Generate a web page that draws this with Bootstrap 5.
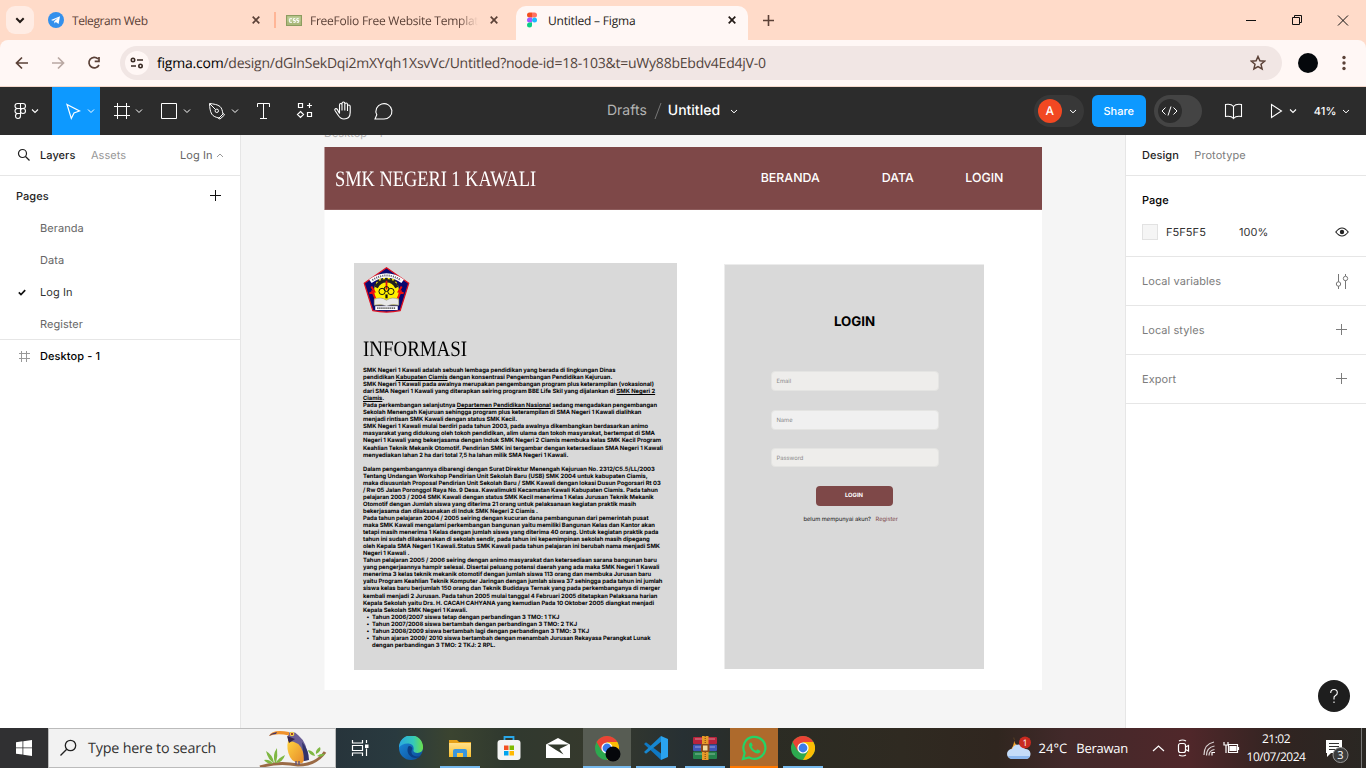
<!DOCTYPE html>
<html lang="id">
<head>
<meta charset="utf-8">
<meta name="viewport" content="width=device-width, initial-scale=1">
<title>Untitled – Figma</title>
<link href="https://cdn.jsdelivr.net/npm/bootstrap@5.3.0/dist/css/bootstrap.min.css" rel="stylesheet">
<style>
body{width:1366px;height:768px;overflow:hidden;font-family:Inter,sans-serif;font-size:11px;line-height:16px;color:#333;background:#fff;text-rendering:geometricPrecision}
svg{display:block;flex:none}
.win-font{font-family:"Open Sans","Noto Sans",sans-serif}
.tabstrip{height:40px;background:#ffdbc9}
.tab-search{width:28px;height:28px;border-radius:9px;background:#ffece4;margin:6px 6px 6px 6px}
.browser-tab{width:234px;padding-left:8px;font-size:12px;letter-spacing:-.2px;color:#5b4137;white-space:nowrap}
.tab-title{flex:1;overflow:hidden;margin-left:8px}
.tab-sep{width:2px;height:16px;background:#ffb596}
.tab-fade{-webkit-mask-image:linear-gradient(90deg,#000 88%,transparent);mask-image:linear-gradient(90deg,#000 88%,transparent)}
.tab-active{width:232px;height:34px;margin-top:6px;border-radius:10px 10px 0 0;background:#fff7f5;color:#231a16;padding:0 0 6px 8px}
.addressbar{height:47px;background:#fff7f5;border-bottom:1px solid #f3d7ca;border-radius:8px 8px 0 0}
.addr-wrap{background:#ffdbc9}
.omnibox{width:1162px;height:34px;border-radius:17px;background:#f1e6e4;padding-left:5px;color:#52443d;font-size:14px}
.site-chip{width:24px;height:24px;border-radius:50%;background:#fff7f5;margin-right:8px}
.url{letter-spacing:-.22px;padding-top:2px}
.toolbar{height:48px;background:#2c2c2c;color:#fff}
.tool-active{background:#0d99ff}
.doc-title{font-size:14px}
.user-pill{width:50px;height:32px;border-radius:16px;background:#383838}
.avatar{width:24px;height:24px;border-radius:50%;background:#f24822;margin-left:4px;font-size:12px;font-weight:500}
.share{width:54px;height:32px;border-radius:6px;background:#0d99ff;font-weight:500;font-size:11px}
.dev-toggle{width:48px;height:32px;border-radius:16px;background:#444}
.workspace{height:593px}
.side{background:#fff;letter-spacing:.055px}
.side-left{width:241px;border-right:1px solid #e6e6e6}
.side-right{width:241px;border-left:1px solid #e6e6e6}
.rule{border-bottom:1px solid #e6e6e6}
.faint{color:#979797}
.tone{color:#666}
.dim{color:#7c7c7c}
.strong{font-weight:550;color:#1e1e1e}
.h41{height:41px}.h36{height:36px}.h32{height:32px}.h49{height:49px}
.swatch{width:16px;height:16px;background:#f5f5f5;border:1px solid #e2e2e2}
.canvas-area{background:#f5f5f5;overflow:hidden;padding-left:84px}
.frame-label{height:12px;line-height:14px;margin-top:0;color:#b3b3b3}
.frame-label span{display:block;transform:translate(-1px,-9px)}
.artboard{width:717px;height:543px;background:#fff;box-shadow:-1px 0 0 #fafafa}
.site-head{height:62.5px;background:#7e4848;border-bottom:1px solid #8d5c5c;padding:1px 38.5px 0 9.5px;color:#fff;box-shadow:-1px 0 0 #b99a9a}
.serif{font-family:"Liberation Serif",serif;font-size:22px;line-height:26px;transform:scaleX(.835);transform-origin:0 50%;white-space:nowrap}
.site-name{padding-top:2px}
.info-title{transform:scaleX(.86);color:#000}
.site-nav{font-size:12.4px;font-weight:500}
.info-card{width:323px;height:407px;margin-left:29px;margin-top:53px;background:#d9d9d9;padding:4px 0 0 9px}
.info-text{font-size:5.83px;line-height:7.05px;font-weight:700;letter-spacing:-.02px;color:#000;white-space:nowrap;margin-top:5px}
.info-text u{text-decoration-thickness:.5px;text-underline-offset:1px}
.info-text ul{padding-left:9px;list-style:none}
.info-text .dot::before{content:"•";display:inline-block;width:5.5px;margin-left:-5.5px}
.login-card{width:260px;height:405px;margin-left:47px;margin-top:54px;background:#d9d9d9;border:1px solid #ececec;border-width:1px 0 0 1px;padding:49px 44.5px 0 45.5px}
.login-head{font-size:13.3px;font-weight:700;line-height:16px;color:#000;height:16px;margin-right:1px}
.field{width:168px;height:20px;border-radius:4px;background:#eeedeb;border:1px solid #e4e4e2;padding:1px 5px 0;font-size:5.8px;color:#888;line-height:18px}
.btn-login{width:77px;height:20px;border-radius:4px;background:#7e4848;color:#fff;font-size:5.8px;font-weight:700;padding-top:1px}
.signup{font-size:5.75px;line-height:8px;color:#111;white-space:nowrap}
.help{right:16px;bottom:16px;width:32px;height:32px;border-radius:50%;background:#1e1e1e}
.taskbar{height:40px;color:#fff;background:linear-gradient(90deg,#303032 0,#303032 3.5%,#27343b 24.5%,#293a3f 29%,#3b4430 33%,#30392f 37%,#36392c 44%,#273033 50%,#2b2c24 56%,#2f2a21 66%,#30261f 73%,#42292a 78%,#50272a 87%,#302421 94%,#2a2723 100%)}
.search-box{width:288px;height:40px;background:#f2f2f2;border:1px solid #bbb;color:#333;font-size:14.3px}
.st{letter-spacing:-.18px;padding-top:2px}
.task{width:49px;height:40px}
.task.run{background:linear-gradient(#76b9ed,#76b9ed) 50% 100%/40px 2px no-repeat}
.task.front{background:linear-gradient(#76b9ed,#76b9ed) 50% 100%/48px 2px no-repeat,#575c53 50% 0/48px 40px no-repeat}
.task.alert-on{background:linear-gradient(#ff7800,#ff7800) 50% 100%/48px 2px no-repeat,linear-gradient(#ae6a2c,#ae6a2c) 50% 0/48px 40px no-repeat}
.tray{font-size:12px}
.clock{width:72px;line-height:18px;letter-spacing:-.48px}
</style>
</head>
<body class="d-flex flex-column">

<svg width="0" height="0" class="position-absolute">
  <defs>
    <linearGradient id="edgeA" x1="0" y1="0" x2="1" y2="0"><stop offset="0" stop-color="#2aa8e0"/><stop offset=".6" stop-color="#35c9b8"/><stop offset="1" stop-color="#6be04a"/></linearGradient>
    <linearGradient id="edgeB" x1="0" y1="0" x2="1" y2="1"><stop offset="0" stop-color="#1b8ee0"/><stop offset="1" stop-color="#0c4a94"/></linearGradient>
    <linearGradient id="fold" x1="0" y1="0" x2="0" y2="1"><stop offset="0" stop-color="#ffe08a"/><stop offset="1" stop-color="#fbc02d"/></linearGradient>
    <linearGradient id="belly" x1="0" y1="0" x2="1" y2="1"><stop offset="0" stop-color="#ffd23f"/><stop offset="1" stop-color="#e58a2a"/></linearGradient>
    <symbol id="x" viewBox="0 0 8 8"><path d="M.7.7l6.6 6.6M7.3.7L.7 7.3" stroke="currentColor" stroke-width="1.7"/></symbol>
    <symbol id="chev" viewBox="0 0 8 5"><path d="M1 1l3 2.8L7 1" fill="none" stroke="currentColor" stroke-width="1"/></symbol>
    <symbol id="plus" viewBox="0 0 12 12"><path d="M5.5 0v11M0 5.5h11" stroke="currentColor" stroke-width="1"/></symbol>
    <symbol id="chrome" viewBox="0 0 24 24"><circle cx="12" cy="12" r="12" fill="#2da94f"/><path d="M1.6 6A12 12 0 0 1 22.4 6H12L6.8 15z" fill="#ea4335"/><path d="M22.4 6A12 12 0 0 1 12 24l5.2-9L12 6z" fill="#fbbc05"/><circle cx="12" cy="12" r="5.6" fill="#fff"/><circle cx="12" cy="12" r="4.4" fill="#3b7cec"/></symbol>
  </defs>
</svg>

<header>
  <div class="tabstrip d-flex align-items-center win-font">
    <div class="tab-search d-flex align-items-center justify-content-center"><svg width="10" height="7" viewBox="0 0 10 7"><path d="M1.3 1.3L5 5l3.7-3.7" fill="none" stroke="#231a16" stroke-width="2"/></svg></div>
    <div class="browser-tab d-flex align-items-center">
      <svg width="16" height="16" viewBox="0 0 16 16"><circle cx="8" cy="8" r="8" fill="#3390ec"/><path d="M3 8l9-3.8L10.6 12 7.8 10 6.5 11.5 6.2 9.2 10 6 5 8.8z" fill="#fff"/></svg>
      <span class="tab-title" style="letter-spacing:-.42px;padding-top:2px">Telegram Web</span>
      <svg width="8" height="8" style="margin-right:14px"><use href="#x"/></svg>
    </div>
    <div class="tab-sep"></div>
    <div class="browser-tab d-flex align-items-center" style="width:240px;padding-left:10px">
      <svg width="16" height="11" viewBox="0 0 16 11"><rect x=".5" y=".5" width="15" height="10" fill="#aab87a" stroke="#8c9c60"/><rect x="1.5" y="1.5" width="13" height="5" fill="#bccb95"/><path d="M6 3.7H3.7v3.6H6M9.3 3.7H7.4v1.8h1.9v1.8H7.3M12.7 3.7h-1.9v1.8h1.9v1.8h-2" fill="none" stroke="#fff"/></svg>
      <span class="tab-title tab-fade" style="letter-spacing:-.25px;padding-top:2px">FreeFolio Free Website Templates</span>
      <svg width="8" height="8" style="margin:0 18px 0 12px"><use href="#x"/></svg>
    </div>
    <div class="browser-tab tab-active d-flex align-items-center">
      <svg width="16" height="16" viewBox="0 0 16 16"><path d="M5.5.5H8v5H5.5a2.5 2.5 0 0 1 0-5z" fill="#f24e1e"/><path d="M8 .5h2.5a2.500 2.500 0 0 1 0 5H8z" fill="#ff7262"/><path d="M8 5.500v5H5.500a2.500 2.500 0 0 1 0-5z" fill="#a259ff"/><circle cx="10.500" cy="8" r="2.500" fill="#1abcfe"/><path d="M5.500 10.500H8V13a2.500 2.500 0 1 1-2.500-2.500z" fill="#0acf83"/></svg>
      <span class="tab-title" style="padding-top:2px">Untitled – Figma</span>
      <svg width="8" height="8" style="margin-right:12px"><use href="#x"/></svg>
    </div>
    <svg width="11" height="11" viewBox="0 0 11 11" style="margin-left:15px"><path d="M5.500 0v11M0 5.500h11" stroke="#5b4137" stroke-width="1.600"/></svg>
    <svg width="104" height="12" viewBox="0 0 104 12" class="ms-auto" style="margin-right:17px" fill="none" stroke="#111"><path d="M1 6.500h10M47.500 3.500h7v7h-7zM49.500 3.500v-2h7v7h-2M93 1.500l10 10M103 1.500l-10 10"/></svg>
  </div>
  <div class="addr-wrap">
    <div class="addressbar d-flex align-items-center">
      <svg width="120" height="46" viewBox="0 0 120 46" fill="none" stroke="#5b4137" stroke-width="1.700"><path d="M28 23H17M22 17.500L16.500 23l5.500 5.500"/><path d="M52 23h11M58 17.500l5.500 5.500-5.500 5.500" stroke="#b9a8a2"/><path d="M99 25a5.300 5.300 0 1 1-1-6.200M99 17v4.300h-4.300"/></svg>
      <div class="omnibox d-flex align-items-center win-font">
        <div class="site-chip d-flex align-items-center justify-content-center"><svg width="14" height="12" viewBox="0 0 14 12" fill="none" stroke="#3a2b25" stroke-width="1.600"><circle cx="3" cy="3" r="1.700"/><path d="M7 3h6M1 9h5"/><circle cx="10.500" cy="9" r="1.700"/></svg></div>
        <span class="url"><span class="text-black">figma.com</span>/design/dGlnSekDqi2mXYqh1XsvVc/Untitled?node-id=18-103&amp;t=uWy88bEbdv4Ed4jV-0</span>
        <svg width="16" height="16" viewBox="0 0 16 16" class="ms-auto" style="margin-right:16px"><path d="M8 1.500l1.900 4.300 4.700.4-3.600 3.100 1.100 4.600L8 11.500l-4.100 2.400L5 9.300 1.400 6.200l4.700-.4z" fill="none" stroke="#5b4137" stroke-width="1.500"/></svg>
      </div>
      <svg width="84" height="46" viewBox="0 0 84 46"><circle cx="26" cy="23" r="10" fill="#05080c"/><g fill="#5b4137"><circle cx="62" cy="17.500" r="1.700"/><circle cx="62" cy="23" r="1.700"/><circle cx="62" cy="28.500" r="1.700"/></g></svg>
    </div>
  </div>

  <nav class="toolbar d-flex align-items-center">
    <svg width="52" height="48" viewBox="0 0 52 48" fill="none" stroke="#fff" stroke-width="1.100"><path d="M20.500 16.500h-3a2.500 2.500 0 0 0 0 5h3M20.500 21.500h-3a2.500 2.500 0 0 0 0 5h3M20.500 16.500v12.500a2.500 2.500 0 1 1-3-2.500M20.500 16.500h2.500a2.500 2.500 0 0 1 0 5h-2.500"/><circle cx="23" cy="24" r="2.500"/><path d="M32 22.500l3 3 3-3"/></svg>
    <div class="tool-active"><svg width="48" height="48" viewBox="0 0 48 48" fill="none" stroke="#fff" stroke-width="1.200"><path d="M15 17.500l12.500 6.500-5.500 2-2.700 5.500z"/><path d="M36 22.500l3 3 3-3" stroke-width="1"/></svg></div>
    <svg width="48" height="48" viewBox="0 0 48 48" fill="none" stroke="#fff"><path d="M14 19.500h16M14 28.500h16M17.500 16v16M26.500 16v16"/><path d="M36 22.500l3 3 3-3"/></svg>
    <svg width="48" height="48" viewBox="0 0 48 48" fill="none" stroke="#fff"><path d="M13.500 16.500h15v15h-15z"/><path d="M36 22.500l3 3 3-3"/></svg>
    <svg width="48" height="48" viewBox="0 0 48 48" fill="none" stroke="#fff"><path d="M13.500 16.500c4.500.5 8 1 10.500 3 2 1.600 2.300 4.500 3 7.500l-4 4c-3-.7-5.800-1.500-7.300-4-1.600-2.700-2-6.500-2.200-10.500zM14 17l5.500 5.500M22.500 31.500l5-5 1 1.500-4.500 4z"/><circle cx="20.800" cy="23.800" r="1.700"/><path d="M36 22.500l3 3 3-3"/></svg>
    <svg width="40" height="48" viewBox="0 0 40 48" fill="none" stroke="#fff"><path d="M13.500 20v-3.500h12V20M19.500 16.500v15M16 31.500h7"/></svg>
    <svg width="40" height="48" viewBox="0 0 40 48" fill="none" stroke="#fff" stroke-width="1.200"><path d="M14.500 16.500h4v4h-4zM23.500 25.500h4v4h-4zM25.500 16v5M23 18.500h5M16.500 24.500l3 3-3 3-3-3z"/></svg>
    <svg width="40" height="48" viewBox="0 0 40 48" fill="none" stroke="#fff" stroke-width="1.100"><path d="M16.500 27v-8.500c0-2 2.500-2 2.500 0V24v-7c0-2 2.800-2 2.800 0v7-6c0-2 2.700-2 2.700 0v6.500-4.500c0-2 2.700-2 2.700 0V26c0 4-2.500 6.500-6.200 6.500-3 0-4.500-1.500-6-4l-3-4.500c-.8-1.500 1-2.500 2.200-1.300z" transform="translate(-1 -.5)"/></svg>
    <svg width="40" height="48" viewBox="0 0 40 48" fill="none" stroke="#fff" stroke-width="1.100"><path d="M11 32l1.800-4.200A8 7.700 0 1 1 19.500 32z"/></svg>
    <div class="doc-title d-flex align-items-center" style="margin-left:203px"><span style="color:#b3b3b3">Drafts</span><svg width="21" height="18" viewBox="0 0 21 18"><path d="M8 17l6-16" stroke="#777"/></svg><span style="font-weight:500">Untitled</span><svg width="8" height="5" style="margin-left:10px"><use href="#chev"/></svg></div>
    <div class="user-pill d-flex align-items-center ms-auto"><div class="avatar d-flex align-items-center justify-content-center">A</div><svg width="8" height="5" style="margin-left:7px"><use href="#chev"/></svg></div>
    <div class="share d-flex align-items-center justify-content-center" style="margin:0 8px">Share</div>
    <div class="dev-toggle"><svg width="48" height="32" viewBox="0 0 48 32" fill="none" stroke="#fff"><circle cx="16" cy="16" r="12" fill="#2c2c2c" stroke="none"/><path d="M11.500 12.500L8 16l3.500 3.500M19.500 12.500L23 16l-3.500 3.500M17 11.500l-3 9"/></svg></div>
    <svg width="64" height="48" viewBox="0 0 64 48" fill="none" stroke="#fff" stroke-width="1.100"><path d="M31.500 19.500c-2-2.500-5-2.500-8-2v12c3-.5 6-.5 8 2 2-2.500 5-2.500 8-2v-12c-3-.5-6-.5-8 2zv12"/></svg>
    <svg width="48" height="48" viewBox="0 0 48 48" fill="none" stroke="#fff" stroke-width="1.100"><path d="M5.500 17.500v13l10-6.500z"/><path d="M24 22.500l3 3 3-3"/></svg>
    <span style="font-weight:500;letter-spacing:.1px">41%</span><svg width="8" height="5" style="margin:0 16.500px 0 5px"><use href="#chev"/></svg>
  </nav>
</header>

<main class="workspace d-flex position-relative">
  <aside class="side side-left">
    <div class="rule h41 d-flex align-items-center">
      <svg width="14" height="14" viewBox="0 0 14 14" style="margin:0 9px 0 17px" fill="none" stroke="#1e1e1e" stroke-width="1.200"><circle cx="5.500" cy="5.500" r="4"/><path d="M8.500 8.500L12.500 12.500"/></svg>
      <span class="strong">Layers</span><span class="faint" style="margin-left:15.500px">Assets</span>
      <span class="ms-auto tone">Log In</span><svg width="8" height="5" viewBox="0 0 8 5" style="margin:0 16px 0 3.500px"><path d="M1 4l3-3 3 3" fill="none" stroke="#999"/></svg>
    </div>
    <div class="h36 d-flex align-items-center justify-content-between px-3" style="padding-top:4px"><span class="strong" style="font-weight:500">Pages</span><svg width="12" height="12" style="margin-right:2px;color:#111"><use href="#plus"/></svg></div>
    <div class="h32 d-flex align-items-center tone" style="padding-left:40px">Beranda</div>
    <div class="h32 d-flex align-items-center tone" style="padding-left:40px">Data</div>
    <div class="h32 d-flex align-items-center"><svg width="8" height="7" viewBox="0 0 8 7" style="margin:0 14px 0 18px"><path d="M.8 3.300L3 5.500 7.200 1.200" fill="none" stroke="#111" stroke-width="1.700"/></svg>Log In</div>
    <div class="h32 d-flex align-items-center tone rule" style="padding-left:40px">Register</div>
    <div class="h32 d-flex align-items-center"><svg width="12" height="12" viewBox="0 0 12 12" style="margin:0 10px 0 18px"><path d="M1 3.500h11M1 8.500h11M3.500 1v11M8.500 1v11" stroke="#999"/></svg><span style="font-weight:500;color:#000;letter-spacing:.1px">Desktop - 1</span></div>
  </aside>

  <section class="canvas-area flex-grow-1">
    <div class="frame-label"><span>Desktop - 1</span></div>
    <div class="artboard">
      <div class="site-head d-flex align-items-center">
        <div class="serif site-name">SMK NEGERI 1 KAWALI</div>
        <div class="site-nav d-flex ms-auto"><span>BERANDA</span><span style="margin-left:62px">DATA</span><span style="margin-left:51.500px">LOGIN</span></div>
      </div>
      <div class="d-flex align-items-start">
        <div class="info-card">
          <svg width="47" height="46" viewBox="0 0 47 47">
            <path d="M23.500.8L46.200 16.500 37.500 44.500Q23.500 47.500 9.500 44.500L.8 16.500z" fill="#0a0870" stroke="#e01020" stroke-width="1.300"/>
            <path d="M11 39V22Q12 11 23.500 10 35 11 36 22V39z" fill="#fff100"/>
            <path d="M13 21Q16 14 23.500 14 31 14 34 21" fill="none" stroke="#222" stroke-width="3.600"/>
            <path d="M11.500 19Q15 11.500 23.500 11.500 32 11.500 35.500 19" fill="none" stroke="#222" stroke-width="2" stroke-dasharray="2.500 2"/>
            <path d="M7 14.500Q23.500 3 40 14.500" fill="none" stroke="#fff" stroke-width="4.500"/>
            <path d="M9 13.500Q23.500 3.800 38 13.500" fill="none" stroke="#667" stroke-width="2" stroke-dasharray="1.200 1"/>
            <path d="M8 20l3 5h-2l3 7M39 20l-3 5h2l-3 7M6 27l5-2M41 27l-5-2" fill="none" stroke="#f01010" stroke-width="2"/>
            <path d="M23.500 14v9" stroke="#e01010" stroke-width="1.800"/>
            <g fill="none" stroke="#111" stroke-width="1"><circle cx="19" cy="25" r="3.200"/><circle cx="28" cy="25" r="3.200"/><circle cx="23.500" cy="22.500" r="2.500"/></g>
            <path d="M23.500 28v4" stroke="#111" stroke-width="2.300"/>
            <path d="M11 33q7-3 12.500 1 5.500-4 12.500-1v6q-7-2-12.500 1-5.500-3-12.500-1z" fill="#e8e8e8" stroke="#888" stroke-width=".6"/>
            <path d="M12 40h23v4H12z" fill="#fff"/><path d="M14 42h19" stroke="#555" stroke-width="2" stroke-dasharray="1.300 .8"/>
          </svg>
          <div class="serif info-title" style="margin-top:23.500px">INFORMASI</div>
          <div class="info-text">SMK Negeri 1 Kawali adalah sebuah lembaga pendidikan yang berada di lingkungan Dinas<br>
pendidikan <u>Kabupaten Ciamis</u> dengan konsentrasi Pengembangan Pendidikan Kejuruan.<br>
SMK Negeri 1 Kawali pada awalnya merupakan pengembangan program plus keterampilan (vokasional)<br>
dari SMA Negeri 1 Kawali yang diterapkan seiring program BBE Life Skil yang dijalankan di <u>SMK Negeri 2</u><br>
<u>Ciamis</u>.<br>
Pada perkembangan selanjutnya <u>Departemen Pendidikan Nasional</u> sedang mengadakan pengembangan<br>
Sekolah Menengah Kejuruan sehingga program plus keterampilan di SMA Negeri 1 Kawali dialihkan<br>
menjadi rintisan SMK Kawali dengan status SMK Kecil.<br>
SMK Negeri 1 Kawali mulai berdiri pada tahun 2003, pada awalnya dikembangkan berdasarkan animo<br>
masyarakat yang didukung oleh tokoh pendidikan, alim ulama dan tokoh masyarakat, bertempat di SMA<br>
Negeri 1 Kawali yang bekerjasama dengan Induk SMK Negeri 2 Ciamis membuka kelas SMK Kecil Program<br>
Keahlian Teknik Mekanik Otomotif. Pendirian SMK ini tergambar dengan ketersediaan SMA Negeri 1 Kawali<br>
menyediakan lahan 2 ha dari total 7,5 ha lahan milik SMA Negeri 1 Kawali.<br>
<br>
Dalam pengembangannya dibarengi dengan Surat Direktur Menengah Kejuruan No. 2312/C5.5/LL/2003<br>
Tentang Undangan Workshop Pendirian Unit Sekolah Baru (USB) SMK 2004 untuk kabupaten Ciamis,<br>
maka disusunlah Proposal Pendirian Unit Sekolah Baru / SMK Kawali dengan lokasi Dusun Pogorsari Rt 03<br>
/ Rw 05 Jalan Poronggol Raya No. 9 Desa. Kawalimukti Kecamatan Kawali Kabupaten Ciamis. Pada tahun<br>
pelajaran 2003 / 2004 SMK Kawali dengan status SMK Kecil menerima 1 Kelas Jurusan Teknik Mekanik<br>
Otomotif dengan Jumlah siswa yang diterima 21 orang untuk pelaksanaan kegiatan praktik masih<br>
bekerjasama dan dilaksanakan di Induk SMK Negeri 2 Ciamis .<br>
Pada tahun pelajaran 2004 / 2005 seiring dengan kucuran dana pembangunan dari pemerintah pusat<br>
maka SMK Kawali mengalami perkembangan bangunan yaitu memiliki Bangunan Kelas dan Kantor akan<br>
tetapi masih menerima 1 Kelas dengan jumlah siswa yang diterima 40 orang. Untuk kegiatan praktik pada<br>
tahun ini sudah dilaksanakan di sekolah sendir, pada tahun ini kepemimpinan sekolah masih dipegang<br>
oleh Kepala SMA Negeri 1 Kawali.Status SMK Kawali pada tahun pelajaran ini berubah nama menjadi SMK<br>
Negeri 1 Kawali .<br>
Tahun pelajaran 2005 / 2006 seiring dengan animo masyarakat dan ketersediaan sarana bangunan baru<br>
yang pengerjaannya hampir selesai. Disertai peluang potensi daerah yang ada maka SMK Negeri 1 Kawali<br>
menerima 3 kelas teknik mekanik otomotif dengan jumlah siswa 113 orang dan membuka Jurusan baru<br>
yaitu Program Keahlian Teknik Komputer Jaringan dengan jumlah siswa 37 sehingga pada tahun ini jumlah<br>
siswa kelas baru berjumlah 150 orang dan Teknik Budidaya Ternak yang pada perkembanganya di merger<br>
kembali menjadi 2 Jurusan. Pada tahun 2005 mulai tanggal 4 Februari 2005 ditetapkan Pelaksana harian<br>
Kepala Sekolah yaitu Drs. H. CACAH CAHYANA yang kemudian Pada 10 Oktober 2005 diangkat menjadi<br>
Kepala Sekolah SMK Negeri 1 Kawali.
            <ul class="mb-0">
              <li class="dot">Tahun 2006/2007 siswa tetap dengan perbandingan 3 TMO: 1 TKJ</li>
              <li class="dot">Tahun 2007/2008 siswa bertambah dengan perbandingan 3 TMO: 2 TKJ</li>
              <li class="dot">Tahun 2008/2009 siswa bertambah lagi dengan perbandingan 3 TMO: 3 TKJ</li>
              <li class="dot">Tahun ajaran 2009/ 2010 siswa bertambah dengan menambah Jurusan Rekayasa Perangkat Lunak<br>dengan perbandingan 3 TMO: 2 TKJ: 2 RPL.</li>
            </ul>
          </div>
        </div>
        <div class="login-card">
          <div class="login-head text-center">LOGIN</div>
          <div class="field" style="margin-top:41.500px">Email</div>
          <div class="field" style="margin-top:18.500px;background:#f0f0f0">Name</div>
          <div class="field" style="margin-top:18px;height:19px">Password</div>
          <div class="btn-login d-flex align-items-center justify-content-center" style="margin:19px 0 0 45px">LOGIN</div>
          <div class="signup" style="margin:10px 0 0 33px"><span>belum mempunyai akun?</span><span style="margin-left:4.500px;color:#7e4848">Register</span></div>
        </div>
      </div>
    </div>
  </section>

  <aside class="side side-right">
    <div class="rule h41 d-flex align-items-center px-3"><span class="strong">Design</span><span class="dim" style="margin-left:15.500px">Prototype</span></div>
    <div class="rule" style="height:81px;padding-top:8px">
      <div class="h32 d-flex align-items-center px-3"><span style="font-weight:500;color:#000">Page</span></div>
      <div class="h32 d-flex align-items-center px-3"><div class="swatch"></div><span style="width:73px;margin-left:8px">F5F5F5</span><span>100%</span>
        <svg width="14" height="10" viewBox="0 0 14 10" class="ms-auto" style="margin-right:1px"><path d="M.8 5Q7-3 13.200 5 7 13 .8 5z" fill="none" stroke="#222" stroke-width="1.200"/><circle cx="7" cy="5" r="2.200" fill="#222"/></svg></div>
    </div>
    <div class="rule h49 d-flex align-items-center justify-content-between px-3 dim">Local variables<svg width="14" height="15" viewBox="0 0 14 15" style="margin-right:1px" fill="none" stroke="#777"><path d="M3.500 0v8M3.500 12v3M10.500 0v2M10.500 6.500V15"/><circle cx="3.500" cy="10" r="2.200"/><circle cx="10.500" cy="4.500" r="2.200"/></svg></div>
    <div class="rule h49 d-flex align-items-center justify-content-between px-3 dim">Local styles<svg width="12" height="12" style="margin-right:2px"><use href="#plus"/></svg></div>
    <div class="rule h49 d-flex align-items-center justify-content-between px-3 dim">Export<svg width="12" height="12" style="margin-right:2px"><use href="#plus"/></svg></div>
  </aside>
  <div class="help position-absolute"><svg width="32" height="32" viewBox="0 0 32 32" fill="none" stroke="#fff" stroke-width="1.100"><path d="M12.700 13q0-3.500 3.300-3.500t3.300 3.200q0 1.800-1.800 2.800T16 18v1.500M16 21.500v1.500"/></svg></div>
</main>

<footer class="taskbar d-flex align-items-center win-font">
  <svg width="48" height="40" viewBox="0 0 48 40" fill="#fff"><path d="M16 14.200l6.500-.9v6.200H16zM23.300 13.200L32 12v7.500h-8.700zM16 20.300h6.500v6.300l-6.500-.9zM23.300 20.300H32V28l-8.700-1.200z"/></svg>
  <div class="search-box d-flex align-items-center">
    <svg width="18" height="18" viewBox="0 0 18 18" style="margin:0 11px 0 10px" fill="none" stroke="#222" stroke-width="1.300"><circle cx="11.500" cy="6.500" r="5.200"/><path d="M7.700 10.300L1.500 16.500"/></svg>
    <span class="st">Type here to search</span>
    <svg width="70" height="38" viewBox="0 0 70 38" class="ms-auto" style="margin-right:7px">
      <path d="M2 38Q20 32 40 36 58 36 67 23" fill="none" stroke="#9a6a45" stroke-width="3"/>
      <path d="M17 34q-3-8 2-15 1 8-1 15zM16 34Q10 31 8 22q7 4 8 12zM15 35q-6 0-9-4 6-1 9 4zM18 34q2-5 9-8-2 7-9 8zM57 27q-6-1-7-6 6 1 7 6zM58 25q-1-4 4-7 2 4-4 7zM59 27q4-3 8-2-3 4-8 2z" fill="#7fb743"/>
      <path d="M30 4q6-3 10 2 10 8 10 25l-5 1L30 14z" fill="#6a5f96"/><path d="M44 13q7 8 7 18l-5 1z" fill="#33346a"/>
      <path d="M30 12q12 0 15 11 2 10-1 11-9 0-12-6-4-8-2-16z" fill="url(#belly)"/>
      <path d="M31 3Q14 0 11 7q8-3 20-.5z" fill="#f0922b"/><path d="M11 7q2-3 8-4l-1 2q-4 0-7 2z" fill="#43356a"/>
      <circle cx="34" cy="5" r="2.300" fill="#f3d34a"/><circle cx="34" cy="5" r="1" fill="#812"/><path d="M29 7l8 3-6 4z" fill="#33244f"/>
      <path d="M38 32v4M41 32v4" stroke="#657" stroke-width="1.500"/>
    </svg>
  </div>
  <svg width="49" height="40" viewBox="0 0 49 40" fill="none" stroke="#fff" stroke-width="1.200"><path d="M16.500 12v3h10v-3M16.500 28v-3h10v3M16.500 17.500h10v5h-10zM30.500 12v3M30.500 20.500V28"/><path d="M29 16.500h3.500v3.500H29z" fill="#fff" stroke="none"/></svg>
  <div class="task d-flex align-items-center justify-content-center" style="width:51px"><svg width="24" height="24" viewBox="0 0 24 24"><circle cx="12" cy="12" r="12" fill="url(#edgeB)"/><path d="M0 11.500A12 12 0 0 1 24 11c.4 3.500-1.800 6-5.500 6-3 0-4.500-1.500-4-3 1-5-3-6.500-6-6.500-4 0-7 2-8.500 4z" fill="url(#edgeA)"/><path d="M9 11c-2 6 2 11 8 11 2 0 4-1 5-2-4 1.500-9 0-9.500-3.500-.3-2 .8-2.500.8-4.200C13 10.500 10 9 9 11z" fill="#0b3f86"/></svg></div>
  <div class="task run d-flex align-items-center justify-content-center" style="width:48px"><svg width="22" height="18" viewBox="0 0 22 18"><path d="M0 1h8l2 2h12v15H0z" fill="#e6a117"/><path d="M0 4h22v14H0z" fill="url(#fold)"/><path d="M4 18v-6q0-2 2-2h10q2 0 2 2v6h-4v-4H8v4z" fill="#3a96dd"/></svg></div>
  <div class="task d-flex align-items-center justify-content-center"><svg width="24" height="24" viewBox="0 0 24 24"><path d="M7.500 5V1h9v4" fill="none" stroke="#29a8ea" stroke-width="1.800"/><rect x=".5" y="4" width="23" height="20" rx="3" fill="#f4f4f4"/><path d="M7 9.500h4.500V14H7z" fill="#f25022"/><path d="M12.500 9.500H17V14h-4.500z" fill="#7fba00"/><path d="M7 15h4.500v4.500H7z" fill="#00a4ef"/><path d="M12.500 15H17v4.500h-4.500z" fill="#ffb900"/></svg></div>
  <div class="task d-flex align-items-center justify-content-center" style="width:50px"><svg width="24" height="20" viewBox="0 0 24 20"><path d="M0 6.500L12 0l12 6.500V20H0z" fill="#fff"/><path d="M1.500 6.500h21L13.500 11l4 5.500L10 12z" fill="#333a2d"/></svg></div>
  <div class="task front d-flex align-items-center justify-content-center" style="width:48px;background-color:#575c53"><svg width="28" height="28" viewBox="0 0 28 28"><use href="#chrome" x="2" y="2" width="24" height="24"/><circle cx="20" cy="20" r="7.500" fill="#05070b"/></svg></div>
  <div class="task run d-flex align-items-center justify-content-center"><svg width="24" height="24" viewBox="0 0 24 24"><path d="M0 8l2-1.800L19 19l-2 5z" fill="#0f79c4"/><path d="M0 16l2 1.800L18 5 17 0z" fill="#1787d0"/><path d="M17 0l7 3v18l-7 3z" fill="#2aa3ee"/></svg></div>
  <div class="task run d-flex align-items-center justify-content-center"><svg width="24" height="24" viewBox="0 0 24 24"><rect y="1" width="24" height="7" rx="1" fill="#b8243c"/><rect y="8.500" width="24" height="6.500" rx="1" fill="#4256b8"/><rect y="15.500" width="24" height="7.500" rx="1" fill="#25834b"/><path d="M2 3h20M2 11h20M2 18h20" stroke="#fff" opacity=".45"/><rect x="9" width="6.500" height="24" fill="#e79a28"/><rect x="8" y="8" width="8.500" height="8" rx="1" fill="#8d4a1b"/><rect x="10" y="9.500" width="4.500" height="5" fill="#f0dca0"/><path d="M12.200 0v8M12.200 16v8" stroke="#704014" stroke-dasharray="1 1"/></svg></div>
  <div class="task alert-on d-flex align-items-center justify-content-center"><svg width="26" height="26" viewBox="0 0 26 26"><path d="M2 24l1.700-6A11 11 0 1 1 8 22.400z" fill="none" stroke="#25d366" stroke-width="2.200"/><path d="M9.500 7.500c-2 1-2 3-.5 5.500 2 3.300 4.500 5 7.500 5.500 1.500 0 3-1 3-2.500l-3-1.700-1.500 1.500c-2-.8-3.300-2-4.300-4l1-1.300-1-2.800z" fill="#25d366"/></svg></div>
  <div class="task run d-flex align-items-center justify-content-center"><svg width="24" height="24"><use href="#chrome"/></svg></div>
  <div class="tray d-flex align-items-center ms-auto h-100">
    <svg width="30" height="28" viewBox="0 0 30 28"><path d="M8 3q-1 8 7 10l-5 5-7-1Q9 13 8 3z" fill="#f5a52d"/><path d="M6 25a5 5 0 0 1 0-10 7 7 0 0 1 13 0 5 5 0 0 1 1 10z" fill="#c5dcf8"/><path d="M2 22h22q-1 3-4 3H6q-3 0-4-3z" fill="#8db8ee"/><circle cx="19" cy="8.500" r="6" fill="#c92a20"/><text x="19" y="11.700" font-size="9" text-anchor="middle" fill="#fff">1</text></svg>
    <span style="font-size:13px;margin-left:3px">24°C</span><span style="font-size:13px;margin-left:9px;letter-spacing:-.25px">Berawan</span>
    <svg width="102" height="40" viewBox="0 0 102 40" fill="none" stroke="#fff" stroke-width="1.200" style="margin-left:10px"><path d="M15 23l5.500-5 5.500 5"/><rect x="40.500" y="15.500" width="7" height="9" rx="2"/><path d="M47.500 19l3-1.500v5.500l-3-1.500M41 13q3.500-2 7 0M41 27q3.500 2 7 0"/><path d="M66 27Q66 16 76 14M68.500 27.500q0-8 8-9.500M71 27.500q0-5 5.500-6" opacity=".8"/><path d="M74 27.500v-3h3"/><path d="M90.500 16.500h9v8h-9z"/><path d="M92 18.500h6v4h-6z" fill="#fff"/><path d="M100.500 19v3M86 14v3h4v-3M88 17v8"/></svg>
    <div class="clock text-center"><div>21:02</div><div>10/07/2024</div></div>
    <svg width="54" height="40" viewBox="0 0 54 40"><path d="M14 12h16v13H19l-4 4v-4h-1z" fill="#fff"/><path d="M17 15.500h10M17 18.500h10M17 21.500h7" stroke="#333"/><circle cx="28.500" cy="27" r="7.500" fill="#3d3d3d" stroke="#999"/><text x="28.500" y="31" font-size="11" text-anchor="middle" fill="#fff">3</text><path d="M49.500 0v40" stroke="#777"/></svg>
  </div>
</footer>
<script src="https://cdn.jsdelivr.net/npm/bootstrap@5.3.0/dist/js/bootstrap.bundle.min.js"></script>
</body>
</html>
